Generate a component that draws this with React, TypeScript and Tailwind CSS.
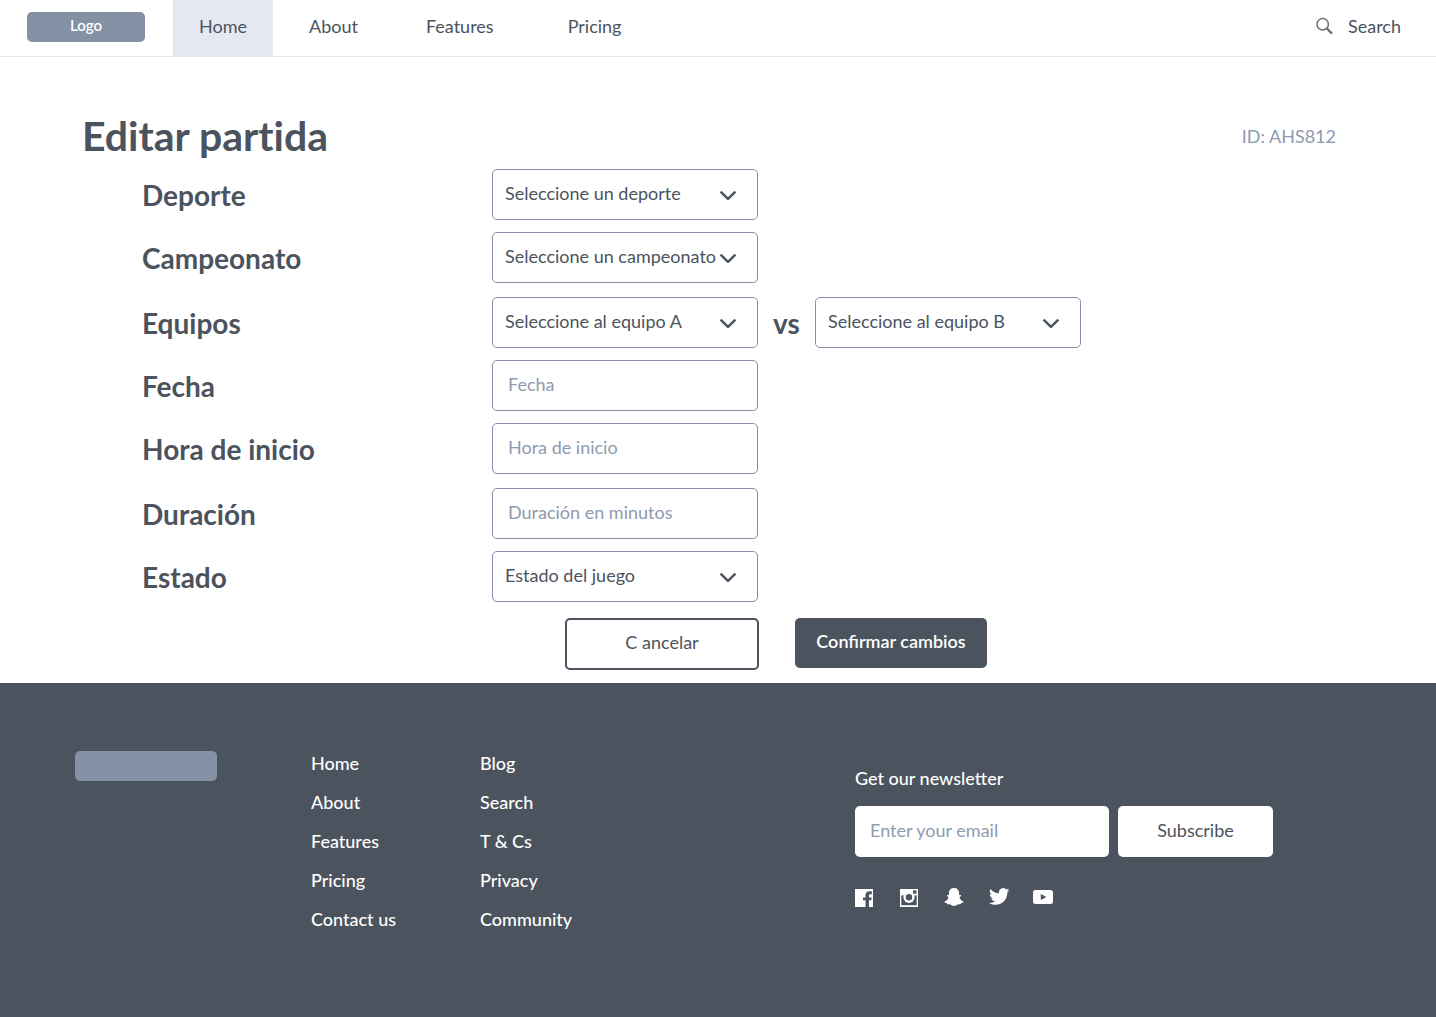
import React from "react";

const INPUT =
  "h-[51px] w-[266px] rounded-[5px] border border-[#8490a6] bg-white px-[15px] pb-[3px] text-[18px] text-[#4b535e] placeholder:text-[#8e9ab0] placeholder:opacity-100 outline-none";

function SelectBox({ id, label, text }: { id: string; label?: string; text: string }) {
  return (
    <div className="relative w-[266px]">
      <select
        id={id}
        aria-label={label}
        className="block h-[51px] w-full appearance-none rounded-[5px] border border-[#8490a6] bg-white pb-[3px] pl-3 pr-10 text-[18px] text-[#4b535e] outline-none"
      >
        <option>{text}</option>
      </select>
      <svg
        className="pointer-events-none absolute right-[21px] top-[21px]"
        width="18"
        height="12"
        viewBox="0 0 18 12"
        fill="none"
        stroke="#4b535e"
        strokeWidth="2.5"
        aria-hidden="true"
      >
        <path d="M1.6 1.6 L9 8.8 L16.4 1.6" strokeLinejoin="round" />
      </svg>
    </div>
  );
}

function Row({
  id,
  label,
  wide,
  children,
}: {
  id: string;
  label: string;
  wide?: boolean;
  children: React.ReactNode;
}) {
  return (
    <div className={wide ? "mt-3.5 flex items-center" : "mt-3 flex items-center"}>
      <label htmlFor={id} className="w-[350px] shrink-0 text-[28px] font-bold leading-9">
        {label}
      </label>
      {children}
    </div>
  );
}

function LinkColumn({ items }: { items: string[] }) {
  return (
    <ul className="flex flex-col gap-[15px]">
      {items.map((item) => (
        <li key={item}>
          <a href="#" className="block">
            {item}
          </a>
        </li>
      ))}
    </ul>
  );
}

function Social({ label, children }: { label: string; children: React.ReactNode }) {
  return (
    <a href="#" aria-label={label}>
      <svg
        className="overflow-visible"
        width="20"
        height="20"
        viewBox="0 0 20 20"
        fill="#ffffff"
        aria-hidden="true"
      >
        {children}
      </svg>
    </a>
  );
}

export default function App() {
  return (
    <div className="flex min-h-screen flex-col bg-white font-['Lato',sans-serif] text-[18px] leading-6 text-[#4b535e]">
      <header className="flex items-stretch border-b border-[#e5e8f2] pl-[27px] pr-[35px]">
        <a
          href="#"
          className="mt-3 mr-7 flex h-[30px] w-[118px] items-center justify-center rounded-[5px] bg-[#8490a3] pb-1 text-[15px] font-semibold text-white"
        >
          Logo
        </a>
        <nav className="flex leading-[52px]">
          <a href="#" className="bg-[#e5e8f2] px-[26px] pb-1">
            Home
          </a>
          <a href="#" className="px-9">
            About
          </a>
          <a href="#" className="px-8">
            Features
          </a>
          <a href="#" className="px-[42px]">
            Pricing
          </a>
        </nav>
        <button type="button" className="ml-auto flex items-center gap-[14px] pb-1">
          <svg width="18" height="18" viewBox="0 0 18 18" fill="none" stroke="#6b7078" aria-hidden="true">
            <circle cx="6.7" cy="7.2" r="5.7" strokeWidth="1.5" />
            <path d="M10.700 11.200 L16 16.800" strokeWidth="2.4" />
          </svg>
          Search
        </button>
      </header>

      <main className="pb-[13px] pt-[57px]">
        <div className="flex items-center justify-between pl-[82px] pr-[100px]">
          <h1 className="text-[41px] font-bold leading-[43px] [font-variant-ligatures:none]">Editar partida</h1>
          <span className="text-[#8e9ab0]">ID: AHS812</span>
        </div>
        <form onSubmit={(e) => e.preventDefault()}>
          <div className="pl-[142px]">
            <Row id="deporte" label="Deporte">
              <SelectBox id="deporte" text="Seleccione un deporte" />
            </Row>
            <Row id="campeonato" label="Campeonato">
              <SelectBox id="campeonato" text="Seleccione un campeonato" />
            </Row>
            <Row id="equipo-a" label="Equipos" wide>
              <SelectBox id="equipo-a" text="Seleccione al equipo A" />
              <span className="w-[57px] text-center text-[28px] font-bold leading-9">vs</span>
              <SelectBox id="equipo-b" label="Equipo B" text="Seleccione al equipo B" />
            </Row>
            <Row id="fecha" label="Fecha">
              <input id="fecha" className={INPUT} placeholder="Fecha" />
            </Row>
            <Row id="hora" label="Hora de inicio">
              <input id="hora" className={INPUT} placeholder="Hora de inicio" />
            </Row>
            <Row id="duracion" label="Duración" wide>
              <input id="duracion" className={INPUT} placeholder="Duración en minutos" />
            </Row>
            <Row id="estado" label="Estado">
              <SelectBox id="estado" text="Estado del juego" />
            </Row>
          </div>
          <div className="mt-4 flex items-start gap-9 pl-[565px]">
            <button
              type="button"
              className="h-[52px] w-[194px] rounded-[5px] border-2 border-[#4b535e] bg-white pb-1"
            >
              C ancelar
            </button>
            <button
              type="submit"
              className="h-[50px] w-[192px] rounded-[5px] bg-[#4b535e] pb-1 font-semibold text-white"
            >
              Confirmar cambios
            </button>
          </div>
        </form>
      </main>

      <footer className="flex flex-1 items-start bg-[#4b535e] pb-[84px] pl-[75px] pt-[68px] font-medium text-white">
        <div className="h-[30px] w-[142px] rounded-[5px] bg-[#8490a3]" />
        <div className="ml-[94px] w-[169px]">
          <LinkColumn items={["Home", "About", "Features", "Pricing", "Contact us"]} />
        </div>
        <div className="w-[375px]">
          <LinkColumn items={["Blog", "Search", "T & Cs", "Privacy", "Community"]} />
        </div>
        <div className="pt-[15px]">
          <label htmlFor="email" className="block">
            Get our newsletter
          </label>
          <form className="mt-4 flex gap-[9px]" onSubmit={(e) => e.preventDefault()}>
            <input
              id="email"
              type="email"
              placeholder="Enter your email"
              className="h-[51px] w-[254px] rounded-[5px] bg-white px-[15px] pb-[3px] font-normal text-[#4b535e] outline-none placeholder:text-[#8e9ab0] placeholder:opacity-100"
            />
            <button type="submit" className="w-[155px] rounded-[5px] bg-white pb-1 font-normal text-[#4b535e]">
              Subscribe
            </button>
          </form>
          <div className="mt-[30px] flex gap-[25px]">
            <Social label="Facebook">
              <path d="M0 2h18v18h-4v-6.700h2.300l.4-2.900H14V8.700c0-.9.300-1.400 1.500-1.400h1.300V4.300c-.3 0-1.100-.1-2.100-.1-2.600 0-4.200 1.500-4.200 4v2.200H8v2.900h2.500V20H0z" />
            </Social>
            <Social label="Instagram">
              <path d="M0 2h18v18H0z" />
              <path d="M1.300 8.400h15.400v9.800H1.300z" fill="#4b535e" />
              <rect x="13" y="3.300" width="3.500" height="3.500" rx="0.600" fill="#4b535e" />
              <circle cx="9" cy="10.300" r="5.600" />
              <circle cx="9" cy="10.300" r="3.200" fill="#4b535e" />
            </Social>
            <Social label="Snapchat">
              <path
                transform="translate(-1 0)"
                d="M10 1C7 1 4.900 3.100 4.900 6v2c-.6.300-1.600-.3-1.900.4-.3.800 1.300 1.200 1.500 2C4.200 12.200 2.300 13.900.5 14.400c-.4.800.9 1.400 2.300 1.700.3.500.1 1 .6 1.200.9.200 2-.3 3 .3 1 .7 2 1.500 3.600 1.500s2.600-.8 3.600-1.500c1-.6 2.100-.1 3-.3.500-.2.300-.7.600-1.200 1.400-.3 2.700-.9 2.300-1.700-1.800-.5-3.700-2.200-4-4 .2-.8 1.800-1.200 1.500-2-.3-.7-1.300-.1-1.900-.4V6C15.100 3.100 13 1 10 1z"
              />
            </Social>
            <Social label="Twitter">
              <path
                transform="translate(-1 -0.700) scale(0.850)"
                d="M23.953 4.570a10 10 0 0 1-2.825.775 4.958 4.958 0 0 0 2.163-2.723c-.951.555-2.005.959-3.127 1.184a4.920 4.920 0 0 0-8.384 4.482C7.690 8.095 4.067 6.130 1.640 3.162a4.822 4.822 0 0 0-.666 2.475c0 1.710.870 3.213 2.188 4.096a4.904 4.904 0 0 1-2.228-.616v.060a4.923 4.923 0 0 0 3.946 4.827 4.996 4.996 0 0 1-2.212.085 4.936 4.936 0 0 0 4.604 3.417 9.867 9.867 0 0 1-6.102 2.105c-.390 0-.779-.023-1.170-.067a13.995 13.995 0 0 0 7.557 2.209c9.053 0 13.998-7.496 13.998-13.985 0-.210 0-.420-.015-.630A9.935 9.935 0 0 0 24 4.590z"
              />
            </Social>
            <Social label="YouTube">
              <path
                transform="translate(-2 0)"
                fillRule="evenodd"
                d="M2.500 3h15A2.500 2.500 0 0 1 20 5.500v9a2.500 2.500 0 0 1-2.500 2.500h-15A2.500 2.500 0 0 1 0 14.500v-9A2.500 2.500 0 0 1 2.500 3zM7.800 6.900v6.200l5.600-3.100z"
              />
            </Social>
          </div>
        </div>
      </footer>
    </div>
  );
}
